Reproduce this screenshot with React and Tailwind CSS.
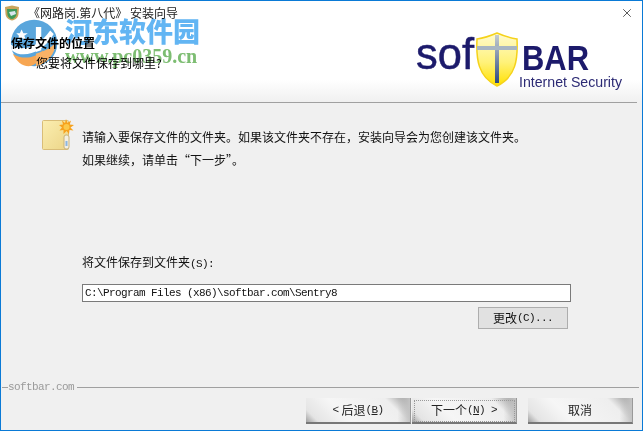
import { X } from 'lucide-react'

const cjk = "font-['Noto_Sans_CJK_SC',sans-serif]"
const half = "font-['Liberation_Mono',monospace] text-[11px] tracking-[-0.6px]"

// Watermark globe that sits over the top-left of the window
function WatermarkGlobe() {
  return (
    <svg width="52" height="50" viewBox="0 0 58 56">
      <circle cx="28" cy="28" r="26" fill="#5aa6dc" />
      <path d="M4 40 C16 48 30 44 38 36 C36 46 30 53 22 54 C14 54 8 48 4 40 Z" fill="#f7a652" />
      <path d="M30 40 C38 38 46 34 52 28 C52 40 42 52 30 54 Z" fill="#f9b266" />
      <path d="M2 30 C14 38 32 34 46 14 L50 18 C38 40 14 46 3 36 Z" fill="#fff" />
      <path d="M30 10 L36 10 L36 36 L30 38 Z" fill="#fff" />
      <path d="M14 13 L16 17 L21 17 L17 20 L19 25 L14 22 L10 25 L11 20 L8 17 L12 17 Z" fill="#fff" />
    </svg>
  )
}

function WizardIcon() {
  return (
    <svg width="16" height="16" viewBox="0 0 16 16">
      <path d="M1 2 L8 0.5 L15 2 L14.5 9 C14 13 11 15 8 15.5 C5 15 2 13 1.5 9 Z" fill="#c9a45c" />
      <path d="M3 4 L13 4 L12.5 10 C11 13 9 14 8 14 C6 14 4 12 3.5 10 Z" fill="#3f9a58" />
      <path d="M5 7 L11 6 L12 9 L7 11 Z" fill="#d9e6ee" />
    </svg>
  )
}

function FolderIcon() {
  return (
    <svg width="32" height="32" viewBox="0 0 32 32">
      <defs>
        <linearGradient id="folderFill" x1="0" y1="0" x2="1" y2="1">
          <stop offset="0" stopColor="#fbeeb0" />
          <stop offset="1" stopColor="#ecd588" />
        </linearGradient>
      </defs>
      <rect x="0.5" y="1.5" width="26" height="29" rx="1" fill="url(#folderFill)" stroke="#d9bd78" />
      <rect x="22" y="16" width="5" height="14" rx="2" fill="#f3efe2" stroke="#c9b27a" />
      <rect x="23.5" y="22" width="2" height="5" fill="#8cb6e0" />
      <path d="M24 0 L25.5 4 L29 1.5 L27.8 5.5 L32 6 L28.5 8.5 L31.5 11.5 L27.5 11 L27 15 L24.5 12 L21.5 15 L21.5 11 L17.5 11.5 L20 8.5 L17 6 L21 5.5 L20 1.5 L23 4 Z" fill="#f6a21e" />
      <circle cx="24.5" cy="8" r="3" fill="#fbc94a" />
    </svg>
  )
}

function SoftbarLogo() {
  return (
    <svg width="214" height="62" viewBox="0 0 214 62">
      <defs>
        <linearGradient id="shieldFill" x1="0" y1="0" x2="0" y2="1">
          <stop offset="0" stopColor="#fffbd0" />
          <stop offset="0.55" stopColor="#fff27a" />
          <stop offset="1" stopColor="#ffe000" />
        </linearGradient>
        <linearGradient id="crossFill" x1="0" y1="0" x2="0" y2="1">
          <stop offset="0" stopColor="#c5ccd0" />
          <stop offset="1" stopColor="#2d4a80" />
        </linearGradient>
      </defs>
      <text x="0" y="37" fontFamily="Liberation Sans" fontSize="44" fill="#1c1a6b" stroke="#1c1a6b" strokeWidth="0.5" textLength="58" lengthAdjust="spacingAndGlyphs">sof</text>
      <path d="M61 7 C68 6 74 4 81 1 C88 4 94 6 101 7 C102 27 100 45 81 54 C62 45 60 27 61 7 Z" fill="url(#shieldFill)" stroke="#f5d21a" strokeWidth="1.5" />
      <rect x="79" y="3" width="4" height="48" fill="url(#crossFill)" />
      <rect x="61" y="14" width="40" height="4" fill="#a9b6c2" />
      <text x="106" y="38" fontFamily="Liberation Sans" fontWeight="700" fontSize="35" fill="#1c1a6b" textLength="67" lengthAdjust="spacingAndGlyphs">BAR</text>
      <text x="103" y="55" fontFamily="Liberation Sans" fontSize="15" fill="#2c2a74" textLength="103" lengthAdjust="spacingAndGlyphs">Internet Security</text>
    </svg>
  )
}

function ImageButton({ children, className }) {
  return (
    <div className={`h-[26px] w-[105px] flex items-center justify-center text-[12px] text-[#222] border-b-2 border-r border-b-[#777] border-r-[#999] bg-[linear-gradient(90deg,transparent_88%,#c4c4c4_100%),linear-gradient(45deg,#a0a0a0_0%,#e4e4e4_10%,#f6f6f6_35%,#eeeeee_80%,#8e8e8e_100%)] ${cjk} ${className || ''}`}>
      {children}
    </div>
  )
}

export default function App() {
  return (
    <div className={`relative w-[643px] h-[431px] overflow-hidden bg-[#f0f0f0] border border-[#0a7ad6] flex flex-col text-black ${cjk}`}>
      {/* Title bar + banner */}
      <div className="h-[101px] shrink-0 bg-[linear-gradient(180deg,#fff_0%,#fff_78%,#f0f0f0_100%)] flex flex-col">
        <div className="h-[24px] pl-[3px] pr-[8px] flex items-center">
          <WizardIcon />
          <span className="ml-[8px] text-[12px] text-[#222]">《网路岗.第八代》 安装向导</span>
          <X className="ml-auto w-[14px] h-[14px] text-black" strokeWidth={1.1} />
        </div>
        <div className="flex flex-1 min-h-0">
          <div className="pl-[10px] pt-[8px]">
            <div className="text-[12px] font-bold leading-[20px]">保存文件的位置</div>
            <div className="pl-[25px] text-[12px] leading-[20px]">您要将文件保存到哪里?</div>
          </div>
          <div className="ml-auto mr-[12px] mt-[7px] w-[214px]">
            <SoftbarLogo />
          </div>
        </div>
      </div>
      <div className="h-px mr-[5px] bg-[#a0a0a0] shrink-0" />

      {/* Body */}
      <div className="flex-1 flex flex-col pl-[81px] pr-[71px] relative">
        <div className="flex pt-[16px] -ml-[40px]">
          <div className="w-[40px] shrink-0">
            <FolderIcon />
          </div>
          <div className="text-[12px] leading-[23px] pt-[6px] text-[#111] whitespace-nowrap">
            <div>请输入要保存文件的文件夹。如果该文件夹不存在{'\uFF0C'}安装向导会为您创建该文件夹。</div>
            <div>如果继续{'\uFF0C'}请单击“下一步”。</div>
          </div>
        </div>

        <div className="mt-[83px] text-[12px] leading-[16px] text-[#111]">
          将文件保存到文件夹<span className={half}>(S):</span>
        </div>
        <div className={`mt-[12px] h-[18px] bg-white border border-[#7a7a7a] pl-[2px] flex items-center text-[#111] whitespace-nowrap ${half}`}>
          C:\Program Files (x86)\softbar.com\Sentry8
        </div>
        <div className="mt-[5px] self-end mr-[3px] w-[90px] h-[22px] bg-[#e1e1e1] border border-[#adadad] flex items-center justify-center text-[12px] text-[#111]">
          更改<span className={half}>(C)...</span>
        </div>

        <div className="flex-1" />
      </div>

      {/* Footer */}
      <div className="h-[44px] shrink-0 flex flex-col">
        <div className="flex items-center pl-px pr-[3px] h-[6px] -mt-[2px]">
          <div className="w-[6px] h-px bg-[#a0a0a0]" />
          <span className={`text-[#9a9a9a] ${half}`}>softbar.com</span>
          <div className="flex-1 ml-[3px] h-px bg-[#a0a0a0]" />
        </div>
        <div className="flex pl-[305px] pt-[8px]">
          <ImageButton>
            <span className={`mr-[3px] ${half}`}>&lt;</span>后退<span className={half}>(<u>B</u>)</span>
          </ImageButton>
          <ImageButton className="ml-[1px] outline-1 -outline-offset-3 outline-dotted outline-[#999]">
            下一个<span className={half}>(<u>N</u>) &gt;</span>
          </ImageButton>
          <ImageButton className="ml-[11px]">取消</ImageButton>
        </div>
      </div>

      {/* Site watermark laid over the banner */}
      <div className="absolute left-[8px] top-[13px] flex pointer-events-none mix-blend-multiply">
        <div className="w-[56px] mt-[4px]">
          <WatermarkGlobe />
        </div>
        <div className="font-bold">
          <div className="text-[27px] leading-[33px] text-[#62b5f3] font-black whitespace-nowrap">河东软件园</div>
          <div className="text-[20px] leading-[18px] text-[#7dbd72] font-['Liberation_Serif',serif] whitespace-nowrap">www.pc0359.cn</div>
        </div>
      </div>
    </div>
  )
}
